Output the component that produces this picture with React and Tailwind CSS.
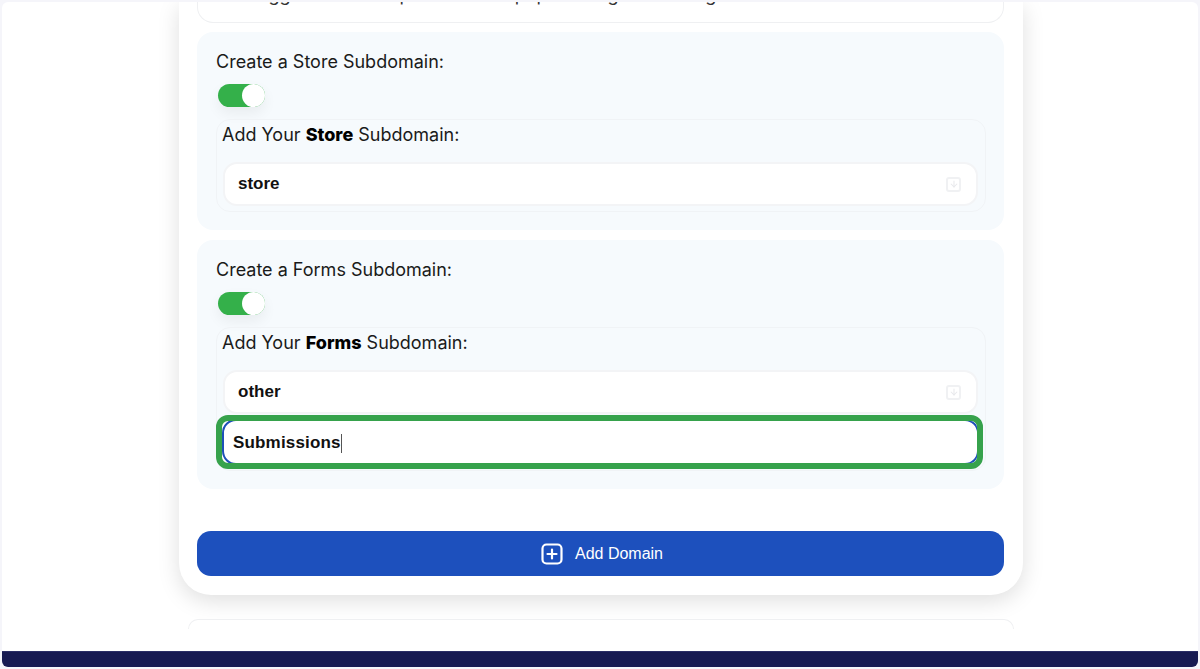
import React from 'react';
import { ArrowDown } from 'lucide-react';

// Small faded save icon at the right of the subdomain inputs
const SaveIcon = () => (
  <div className="w-[15px] h-[15px] rounded-[3px] border-2 border-[#f0f1f3] flex items-center justify-center">
    <ArrowDown size={10} strokeWidth={2.5} className="text-[#e8e9ec]" />
  </div>
);

const Toggle = () => (
  <div className="ml-0.5 mt-[10px] w-[47px] h-[23px] rounded-full bg-[#34b04a] flex justify-end shadow-[0_6px_14px_rgba(0,0,0,0.06)]">
    <div className="w-[23px] h-[23px] rounded-full bg-white" />
  </div>
);

const SubdomainInput = ({ value }) => (
  <div className="h-[44px] rounded-[14px] bg-white border-2 border-[#f3f4f6] pl-[13px] pr-[15px] flex items-center justify-between">
    <span className="font-['Liberation_Sans',sans-serif] font-bold text-[17px] text-[#111]">{value}</span>
    <SaveIcon />
  </div>
);

const SubdomainSection = ({ title, name, value, children }) => (
  <section className="rounded-[16px] bg-[#f6fafd] pl-[19px] pr-[18px] pt-[18px] pb-[18px]">
    <p className="font-['Inter',sans-serif] text-[18px] leading-6 text-[#1a1a1a]">{title}</p>
    <Toggle />
    <div className="mt-[12px] rounded-[14px] border border-[#f0f3f6] pl-[6px] pr-[7px] pt-[3px] pb-[5px]">
      <p className="-ml-px font-['Inter',sans-serif] text-[18px] leading-6 text-[#1a1a1a] mb-[15px]">
        Add Your <b className="font-extrabold text-black">{name}</b> Subdomain:
      </p>
      <SubdomainInput value={value} />
      {children}
    </div>
  </section>
);

export default function App() {
  return (
    <div className="h-[669px] overflow-hidden bg-[#f5f5fa] pt-[2px] px-[2px] pb-[2px] flex flex-col">
      <main className="flex-1 min-h-0 overflow-hidden rounded-t-[6px] bg-white flex flex-col items-center">
        <div className="ml-[2px] w-[844px] shrink-0 rounded-b-[32px] bg-white pl-[18px] pr-[19px] pb-[19px] shadow-[0_6px_22px_rgba(0,0,0,0.13)] flex flex-col">
          <div className="h-[21px] rounded-b-[16px] border border-t-0 border-[#eff0f2] pl-[18px] overflow-hidden">
            <p className="-mt-[17px] font-['Inter',sans-serif] text-[18px] leading-5 text-[#333] whitespace-nowrap">
              We suggest the main portal for the pop-in things as the big
            </p>
          </div>
          <div className="mt-[9px] flex flex-col gap-[10px]">
            <SubdomainSection title="Create a Store Subdomain:" name="Store" value="store" />
            <SubdomainSection title="Create a Forms Subdomain:" name="Forms" value="other">
              <div className="-ml-[7px] -mr-[5px] mt-px -mb-[4px] relative z-10 h-[54px] rounded-[12px] border-[6px] border-[#36a24c] bg-white overflow-hidden">
                <div className="h-[46px] -my-[2px] -mr-[2px] rounded-[14px] border-2 border-[#1d50b8] bg-white flex items-center pl-[9px] pt-[2px]">
                  <span className="font-['Liberation_Sans',sans-serif] font-bold text-[17px] tracking-[0.01em] text-[#111]">Submissions</span>
                  <span className="w-px h-[19px] bg-[#555]" />
                </div>
              </div>
            </SubdomainSection>
          </div>
          <button className="mt-[42px] h-[45px] rounded-[14px] bg-[#1d50bd] text-white pl-[3px] flex items-center justify-center gap-[12px] font-['Liberation_Sans',sans-serif] text-[16px]">
            <svg width="22" height="22" viewBox="0 0 22 22" fill="none" stroke="currentColor" strokeWidth="2.2" strokeLinecap="round">
              <rect x="1.5" y="1.5" width="19" height="19" rx="4" />
              <path d="M11 6.5v9M6.5 11h9" />
            </svg>
            Add Domain
          </button>
        </div>
        <div className="ml-[2px] mt-[24px] w-[826px] h-[10px] shrink-0 rounded-t-[24px] border-t border-x border-[#eff0f2] bg-white" />
      </main>
      <footer className="h-[16px] shrink-0 rounded-b-[6px] bg-[#171a52] border-t border-[#2a2d66]" />
    </div>
  );
}
